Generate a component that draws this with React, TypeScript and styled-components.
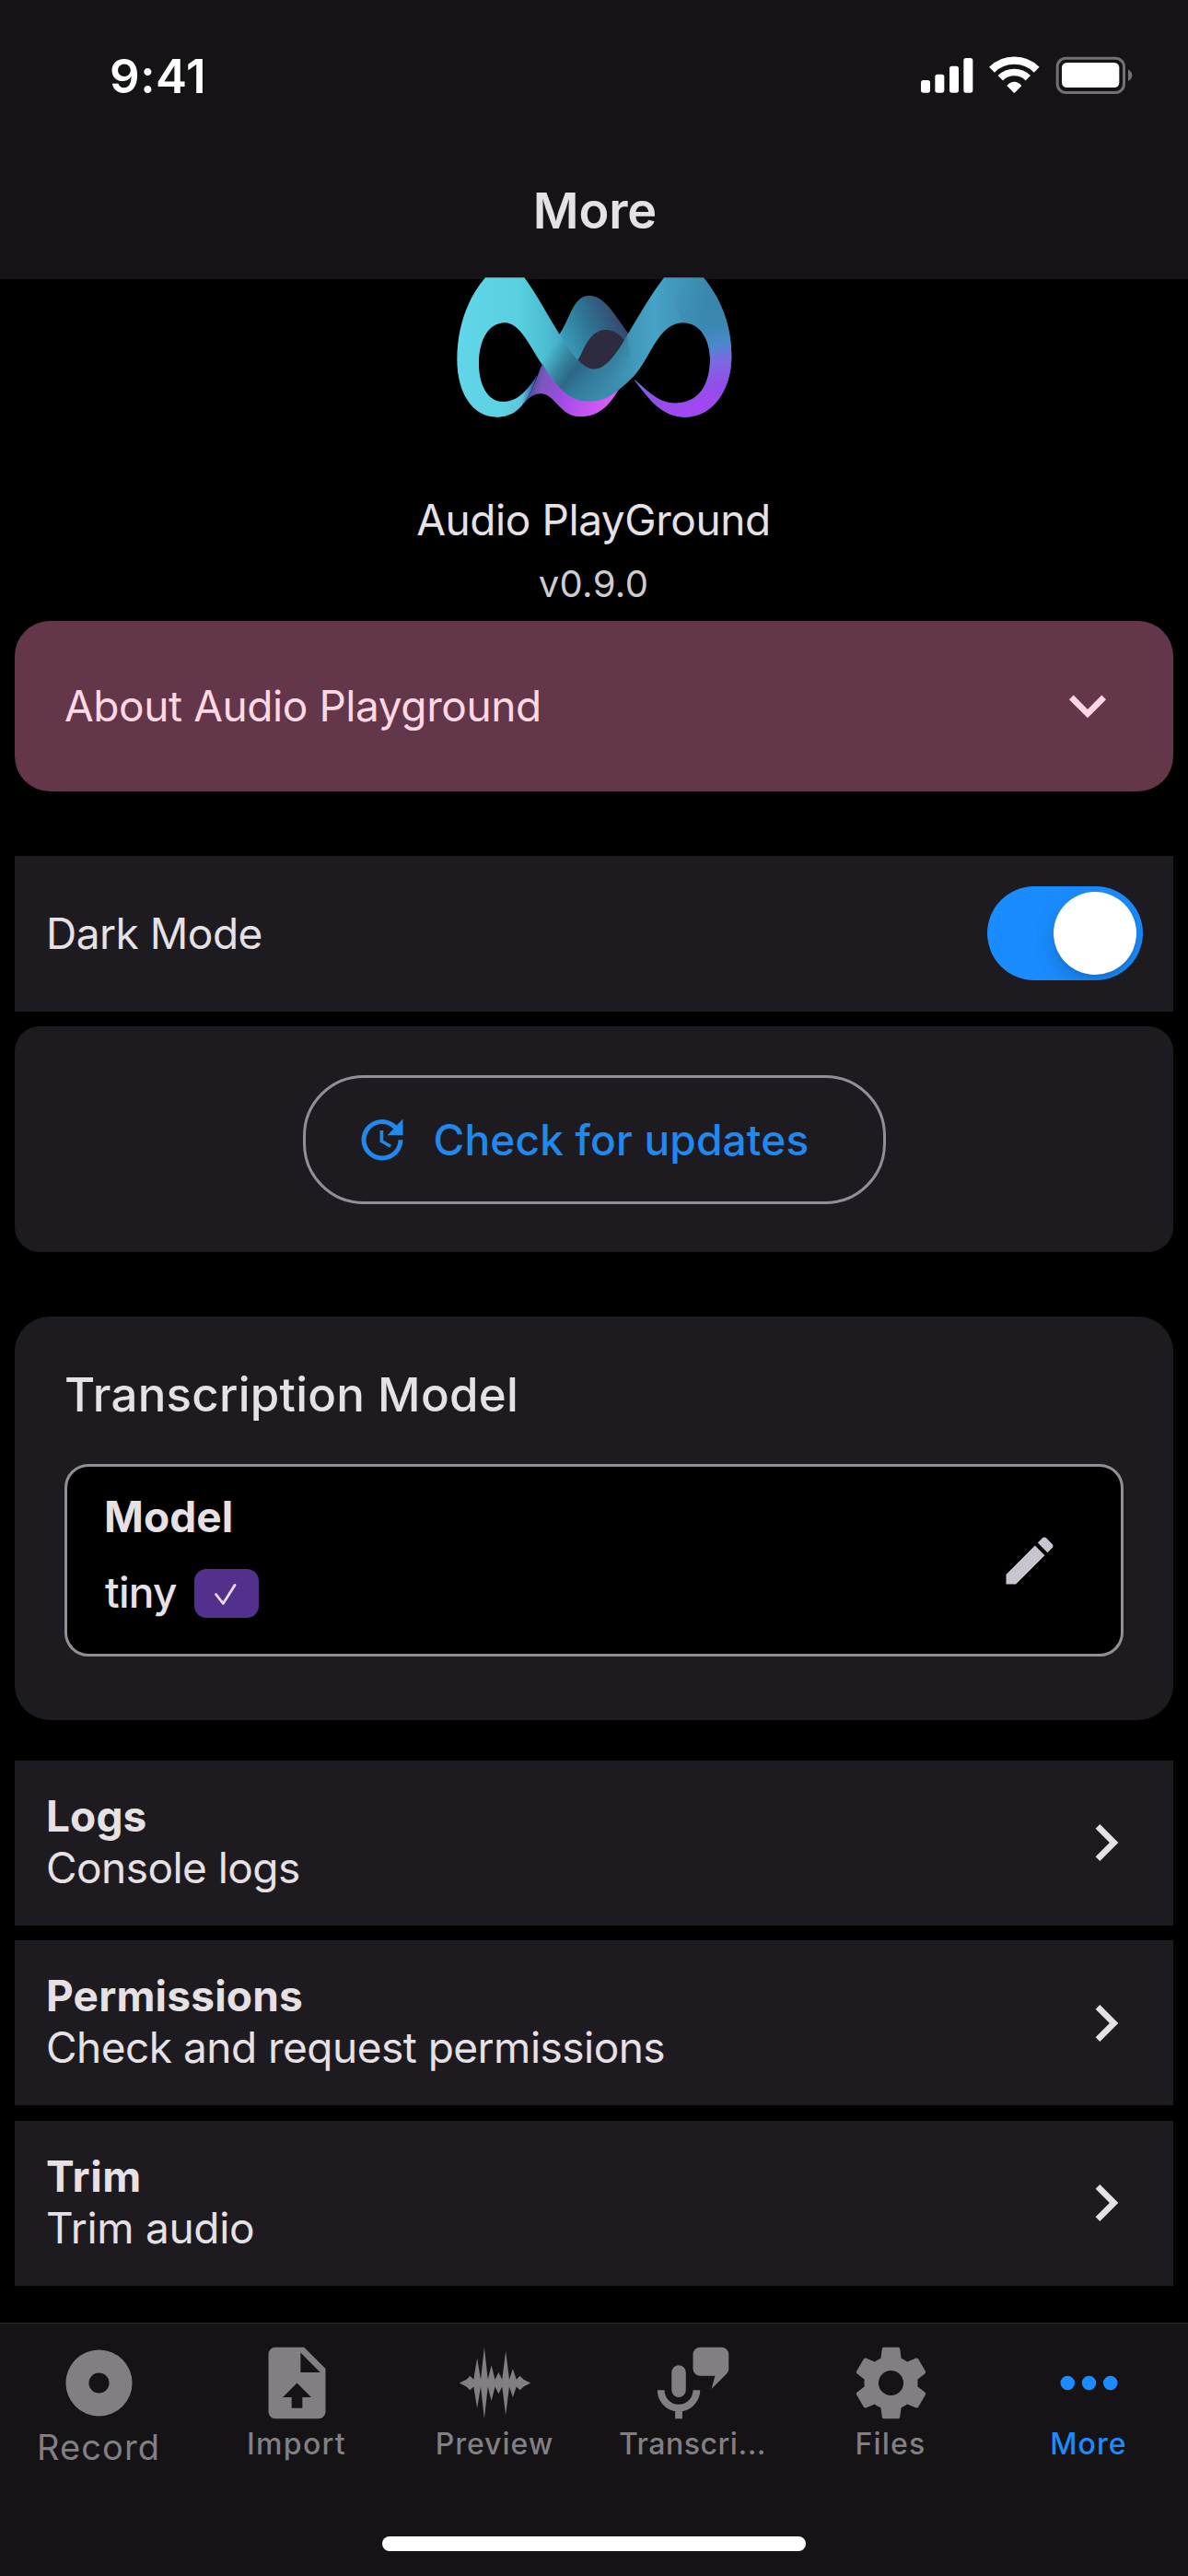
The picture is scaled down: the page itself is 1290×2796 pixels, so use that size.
import React from 'react';
import styled, { createGlobalStyle } from 'styled-components';

const color = {
  page: '#000000',
  bar: '#151316',
  card: '#1e1b20',
  text: '#e6e1e5',
  blue: '#1a8cff',
  muted: '#827f83',
  outline: '#938f99',
  pink: '#ffd8e4',
};

const GlobalStyle = createGlobalStyle`
  body {
    margin: 0;
    background: ${color.page};
    font-family: Inter, Roboto, 'Liberation Sans', sans-serif;
  }
  svg {
    display: block;
    flex-shrink: 0;
  }
`;

const Screen = styled.div`
  display: flex;
  flex-direction: column;
  width: 1290px;
  height: 2796px;
  overflow: hidden;
  background: ${color.page};
  color: ${color.text};
`;

const Header = styled.header`
  flex-shrink: 0;
  height: 303px;
  background: ${color.bar};
`;

const StatusBar = styled.div`
  display: flex;
  align-items: center;
  justify-content: space-between;
  height: 165px;
  padding: 0 40px 0 119px;
`;

const Title = styled.h1`
  margin: 0;
  font-size: 54px;
  font-weight: 600;
  line-height: 127px;
  letter-spacing: -0.15px;
  text-align: center;
  text-indent: 2px;
`;

const Content = styled.main`
  display: flex;
  flex: 1;
  flex-direction: column;
  min-height: 0;
  padding: 0 16px;
`;

const Hero = styled.section`
  display: flex;
  flex-direction: column;
  align-items: center;
  height: 371px;
  padding-right: 1px;

  svg {
    position: relative;
    margin-top: -2px;
  }
`;

interface LabelProps {
  $size?: number;
  $weight?: number;
  $line?: number;
  $spacing?: number;
}

const Label = styled.span<LabelProps>`
  display: block;
  font-size: ${(p) => p.$size ?? 46}px;
  font-weight: ${(p) => p.$weight ?? 400};
  line-height: ${(p) => p.$line ?? 60}px;
  letter-spacing: ${(p) => p.$spacing ?? -0.5}px;
  white-space: nowrap;
`;

const Time = styled(Label)`
  color: #ffffff;
`;

const AppName = styled(Label)`
  margin-top: 64px;
`;

const Version = styled(Label)`
  margin-top: 12px;
  color: #cfcbce;
`;

const Accordion = styled.button`
  display: flex;
  flex-shrink: 0;
  align-items: center;
  justify-content: space-between;
  height: 185px;
  padding: 0 53px 2px 54px;
  border: 0;
  border-radius: 38px;
  background: #633649;
  color: ${color.pink};
  font-family: inherit;
`;

const SettingRow = styled.div`
  display: flex;
  flex-shrink: 0;
  align-items: center;
  justify-content: space-between;
  box-sizing: border-box;
  height: 169px;
  margin-top: 70px;
  padding: 0 33px 1px 34px;
  background: ${color.card};
`;

const Switch = styled.div`
  display: flex;
  align-items: center;
  justify-content: flex-end;
  box-sizing: border-box;
  width: 169px;
  height: 102px;
  padding-right: 7px;
  overflow: hidden;
  border-radius: 51px;
  background: ${color.blue};
`;

const Knob = styled.div`
  width: 90px;
  height: 90px;
  border-radius: 50%;
  background: #ffffff;
  box-shadow: 0 9px 24px rgba(0, 0, 0, 0.17), 0 3px 3px rgba(0, 0, 0, 0.06);
`;

const UpdateCard = styled.section`
  display: flex;
  flex-shrink: 0;
  align-items: center;
  justify-content: center;
  height: 245px;
  margin-top: 16px;
  border-radius: 27px;
  background: ${color.card};
`;

const UpdateButton = styled.button`
  display: flex;
  align-items: center;
  gap: 26px;
  box-sizing: border-box;
  width: 633px;
  height: 140px;
  padding: 0 0 0 53px;
  border: 3px solid ${color.outline};
  border-radius: 66px;
  background: transparent;
  color: #2188ee;
  font-family: inherit;
`;

const ModelCard = styled.section`
  flex-shrink: 0;
  box-sizing: border-box;
  height: 438px;
  margin-top: 70px;
  padding: 53px 54px 0 54px;
  border-radius: 38px;
  background: ${color.card};
`;

const ModelBox = styled.div`
  display: flex;
  align-items: center;
  justify-content: space-between;
  box-sizing: border-box;
  height: 209px;
  margin-top: 43px;
  padding: 0 65px 0 40px;
  border: 3px solid #918f94;
  border-radius: 26px;
  background: ${color.page};
`;

const ModelInfo = styled.div`
  align-self: flex-start;
  padding-top: 24px;
`;

const ModelValue = styled.div`
  display: flex;
  align-items: center;
  gap: 19px;
  height: 53px;
  margin-top: 27px;
  padding-left: 1px;

  > span {
    margin-top: -3px;
  }
`;

const Badge = styled.div`
  width: 70px;
  height: 53px;
  border-radius: 13px;
  background: #53308b;
`;

const LinkList = styled.nav`
  display: flex;
  flex-shrink: 0;
  flex-direction: column;
  gap: 16.5px;
  margin-top: 43.5px;
`;

const LinkRow = styled.a`
  display: flex;
  align-items: center;
  justify-content: space-between;
  height: 179px;
  padding: 0 33px 0 34px;
  background: ${color.card};
`;

const LinkText = styled.div`
  padding-bottom: 3px;
`;

const TabBar = styled.footer`
  display: flex;
  flex-shrink: 0;
  flex-direction: column;
  align-items: center;
  justify-content: space-between;
  box-sizing: border-box;
  height: 275px;
  padding-bottom: 27px;
  border-top: 1px solid #2c2a2e;
  background: ${color.bar};
`;

const Tabs = styled.div`
  display: grid;
  grid-template-columns: repeat(6, 215px);
  padding-top: 18px;
`;

const Tab = styled.a<{ $active?: boolean }>`
  display: flex;
  flex-direction: column;
  align-items: center;
  padding-right: 1px;
  color: ${(p) => (p.$active ? color.blue : color.muted)};
`;

const HomeIndicator = styled.div`
  width: 460px;
  height: 16px;
  border-radius: 8px;
  background: #ffffff;
`;

const paths = {
  chevronDown: 'M7.41,8.58L12,13.17L16.59,8.58L18,10L12,16L6,10L7.41,8.58Z',
  chevronRight: 'M8.59,16.58L13.17,12L8.59,7.41L10,6L16,12L10,18L8.59,16.58Z',
  update:
    'M21,10.12H14.22L16.96,7.3C14.23,4.6 9.81,4.5 7.08,7.2C4.35,9.91 4.35,14.28 7.08,17C9.81,19.7 14.23,19.7 16.96,17C18.32,15.65 19,14.08 19,12.1H21C21,14.08 20.12,16.65 18.36,18.39C14.85,21.87 9.15,21.87 5.64,18.39C2.14,14.92 2.11,9.28 5.62,5.81C9.13,2.34 14.76,2.34 18.27,5.81L21,3V10.12M12.5,8V12.25L16,14.33L15.28,15.54L11,13V8H12.5Z',
  pencil:
    'M20.71,7.04C21.1,6.65 21.1,6 20.71,5.63L18.37,3.29C18,2.9 17.35,2.9 16.96,3.29L15.12,5.12L18.87,8.87M3,17.25V21H6.75L17.81,9.93L14.06,6.18L3,17.25Z',
  record:
    'M12,2.7A9.3,9.3 0 1,1 12,21.3A9.3,9.3 0 1,1 12,2.7ZM12,9.15A2.85,2.85 0 1,0 12,14.85A2.85,2.85 0 1,0 12,9.15Z',
  fileUpload:
    'M14,2H6C4.89,2 4,2.89 4,4V20C4,21.11 4.89,22 6,22H18C19.11,22 20,21.11 20,20V8L14,2M13.5,16V19H10.5V16H8L12,12L16,16H13.5M13,9V3.5L18.5,9H13Z',
  waveform:
    'M22 12L20 13L19 14L18 13L17 16L16 13L15 21L14 13L13 15L12 13L11 17L10 13L9 22L8 13L7 19L6 13L5 14L4 13L2 12L4 11L5 10L6 11L7 5L8 11L9 2L10 11L11 7L12 11L13 9L14 11L15 3L16 11L17 8L18 11L19 10L20 11L22 12Z',
  micMessage:
    'M8,7A2,2 0 0,1 10,9V14A2,2 0 0,1 8,16A2,2 0 0,1 6,14V9A2,2 0 0,1 8,7M14,14C14,16.97 11.84,19.44 9,19.92V22H7V19.92C4.16,19.44 2,16.97 2,14H4A4,4 0 0,0 8,18A4,4 0 0,0 12,14H14M21.41,9.41L17.17,13.66L18.18,10H14A2,2 0 0,1 12,8V4A2,2 0 0,1 14,2H20A2,2 0 0,1 22,4V8C22,8.55 21.78,9.05 21.41,9.41Z',
  cog:
    'M12,15.5A3.5,3.5 0 0,1 8.5,12A3.5,3.5 0 0,1 12,8.5A3.5,3.5 0 0,1 15.5,12A3.5,3.5 0 0,1 12,15.5M19.43,12.97C19.47,12.65 19.5,12.33 19.5,12C19.5,11.67 19.47,11.34 19.43,11L21.54,9.37C21.73,9.22 21.78,8.95 21.66,8.73L19.66,5.27C19.54,5.05 19.27,4.96 19.05,5.05L16.56,6.05C16.04,5.66 15.5,5.32 14.87,5.07L14.5,2.42C14.46,2.18 14.25,2 14,2H10C9.75,2 9.54,2.18 9.5,2.42L9.13,5.07C8.5,5.32 7.96,5.66 7.44,6.05L4.95,5.05C4.73,4.96 4.46,5.05 4.34,5.27L2.34,8.73C2.21,8.95 2.27,9.22 2.46,9.37L4.57,11C4.53,11.34 4.5,11.67 4.5,12C4.5,12.33 4.53,12.65 4.57,12.97L2.46,14.63C2.27,14.78 2.21,15.05 2.34,15.27L4.34,18.73C4.46,18.95 4.73,19.03 4.95,18.95L7.44,17.94C7.96,18.34 8.5,18.68 9.13,18.93L9.5,21.58C9.54,21.82 9.75,22 10,22H14C14.25,22 14.46,21.82 14.5,21.58L14.87,18.93C15.5,18.67 16.04,18.34 16.56,17.94L19.05,18.95C19.27,19.03 19.54,18.95 19.66,18.73L21.66,15.27C21.78,15.05 21.73,14.78 21.54,14.63L19.43,12.97Z',
  dots:
    'M16,12A2,2 0 0,1 18,10A2,2 0 0,1 20,12A2,2 0 0,1 18,14A2,2 0 0,1 16,12M10,12A2,2 0 0,1 12,10A2,2 0 0,1 14,12A2,2 0 0,1 12,14A2,2 0 0,1 10,12M4,12A2,2 0 0,1 6,10A2,2 0 0,1 8,12A2,2 0 0,1 6,14A2,2 0 0,1 4,12Z',
};

type IconName = keyof typeof paths;

function Icon({ name, size, fill = 'currentColor' }: { name: IconName; size: number; fill?: string }) {
  return (
    <svg width={size} height={size} viewBox="0 0 24 24" fill={fill} aria-hidden="true">
      <path d={paths[name]} />
    </svg>
  );
}

function StatusIcons() {
  return (
    <svg width="270" height="65" viewBox="0 0 810 195" fill="#fff" aria-hidden="true">
      <rect x="60" y="111" width="30" height="41" rx="8" />
      <rect x="106" y="92" width="30" height="60" rx="8" />
      <rect x="153" y="65" width="30" height="87" rx="8" />
      <rect x="199" y="39" width="30" height="113" rx="8" />
      <g fill="none" stroke="#fff">
        <path d="M291 77A104 104 0 0 1 437 77" strokeWidth="25" />
        <path d="M319 104A64 64 0 0 1 409 104" strokeWidth="23" />
      </g>
      <path d="M340 129Q364 104 388 129L367 151Q364 154 361 151Z" />
      <rect x="504.5" y="39.5" width="217" height="112" rx="28" fill="none" stroke="#737175" strokeWidth="9" />
      <rect x="519" y="54" width="187" height="81" rx="16" />
      <path d="M735 76Q748 84 748 95Q748 107 735 114Z" fill="#737175" />
    </svg>
  );
}

function Logo() {
  return (
    <svg width="350" height="169" viewBox="0 33 1050 507" aria-hidden="true">
      <defs>
        <linearGradient id="ribbon" gradientUnits="userSpaceOnUse" x1="80" y1="190" x2="900" y2="190">
          <stop offset="0" stopColor="#62d6e8" />
          <stop offset="0.25" stopColor="#58cfdf" />
          <stop offset="0.36" stopColor="#4abcd2" />
          <stop offset="0.5" stopColor="#3b8fb0" />
          <stop offset="0.62" stopColor="#3b8cae" />
          <stop offset="0.78" stopColor="#46a3c6" />
          <stop offset="1" stopColor="#3a86ad" />
        </linearGradient>
        <linearGradient id="fold" gradientUnits="userSpaceOnUse" x1="385" y1="270" x2="560" y2="415">
          <stop offset="0" stopColor="#2a5f7c" stopOpacity="0" />
          <stop offset="0.3" stopColor="#2a5f7c" stopOpacity="0.6" />
          <stop offset="0.45" stopColor="#27587a" stopOpacity="0.8" />
          <stop offset="0.65" stopColor="#2a6a88" stopOpacity="0.6" />
          <stop offset="1" stopColor="#2f6f8d" stopOpacity="0" />
        </linearGradient>
        <linearGradient id="loop" gradientUnits="userSpaceOnUse" x1="860" y1="60" x2="945" y2="470">
          <stop offset="0" stopColor="#3a86ad" stopOpacity="0" />
          <stop offset="0.3" stopColor="#3a88b2" stopOpacity="0.6" />
          <stop offset="0.48" stopColor="#4a8acb" />
          <stop offset="0.6" stopColor="#7a6ae0" />
          <stop offset="0.8" stopColor="#934dea" />
          <stop offset="1" stopColor="#a845f6" />
        </linearGradient>
        <linearGradient id="under" gradientUnits="userSpaceOnUse" x1="315" y1="380" x2="590" y2="450">
          <stop offset="0" stopColor="#4a4a9c" />
          <stop offset="0.14" stopColor="#7c56bd" />
          <stop offset="0.4" stopColor="#a04ce4" />
          <stop offset="0.75" stopColor="#c956f3" />
          <stop offset="1" stopColor="#dd60f4" />
        </linearGradient>
        <linearGradient id="back" gradientUnits="userSpaceOnUse" x1="430" y1="250" x2="615" y2="175">
          <stop offset="0" stopColor="#3a9bba" />
          <stop offset="0.45" stopColor="#2f7594" />
          <stop offset="1" stopColor="#34496e" />
        </linearGradient>
        <linearGradient id="tail" gradientUnits="userSpaceOnUse" x1="235" y1="415" x2="322" y2="432">
          <stop offset="0" stopColor="#5dd3e3" />
          <stop offset="0.65" stopColor="#5cc4de" />
          <stop offset="1" stopColor="#2a4fa8" />
        </linearGradient>
      </defs>

      {/* Ribbon passing behind the centre fold */}
      <path d="M410 222C450 165 456 93 510 93C562 93 598 165 640 220L622 240C600 290 565 340 525 335C490 330 480 320 465 302Z" fill="url(#back)" />
      <path d="M472 302C490 280 506 204 564 204C592 204 608 220 624 238C600 290 565 336 525 334C500 334 487 318 472 302Z" fill="#2d2b40" />

      {/* Purple underside */}
      <path d="M355 318C335 370 322 408 297 442C315 425 330 412 350 412C400 412 412 487 480 487C550 487 580 440 609 394L510 430L430 400Z" fill="url(#under)" />

      {/* Front ribbon */}
      <path
        d="M171 34H298C340 90 378 165 415 222C440 258 478 332 525 332C565 332 600 280 633 222C673 155 710 90 753 34H882C945 110 973 200 973 290C973 400 910 488 825 488C745 488 705 430 655 365C690 392 730 443 790 443C860 443 903 390 903 300C903 235 870 181 815 181C735 181 710 295 655 355Q632 379 607 398C575 423 550 437 510 437C430 437 395 372 357 318C318 263 285 181 235 181C180 181 150 240 150 315C150 385 180 438 228 438L240 484Q224 488 207 488C130 488 79 410 79 300C79 200 110 105 171 34Z"
        fill="url(#ribbon)"
      />

      {/* Closing end of the left loop */}
      <path d="M226 438C275 438 305 405 341 350C328 390 315 415 297 442C275 472 250 488 207 488Z" fill="url(#tail)" />

      {/* Shade across the fold and the purple turn of the right loop */}
      <path d="M380 168L415 222C440 258 478 332 525 332C565 332 600 280 633 222L655 355Q632 379 607 398C575 423 550 437 510 437C430 437 395 372 357 318L320 262Z" fill="url(#fold)" />
      <path
        d="M753 34H882C945 110 973 200 973 290C973 400 910 488 825 488C745 488 705 430 655 365C690 392 730 443 790 443C860 443 903 390 903 300C903 235 870 181 815 181Z"
        fill="url(#loop)"
      />
    </svg>
  );
}

const links = [
  { title: 'Logs', detail: 'Console logs', titleSpacing: 0.1, detailSpacing: -0.55 },
  { title: 'Permissions', detail: 'Check and request permissions', titleSpacing: 0.18, detailSpacing: -0.52 },
  { title: 'Trim', detail: 'Trim audio', titleSpacing: 0.5, detailSpacing: -0.31 },
];

const tabs: { label: string; icon: IconName; large?: boolean; active?: boolean; spacing: number }[] = [
  { label: 'Record', icon: 'record', large: true, spacing: 1.1 },
  { label: 'Import', icon: 'fileUpload', spacing: 1.3 },
  { label: 'Preview', icon: 'waveform', spacing: 1 },
  { label: 'Transcri...', icon: 'micMessage', spacing: 0.53 },
  { label: 'Files', icon: 'cog', spacing: 1.2 },
  { label: 'More', icon: 'dots', active: true, spacing: 1.1 },
];

export default function App() {
  return (
    <Screen>
      <GlobalStyle />
      <Header>
        <StatusBar>
          <Time $size={51} $weight={600} $spacing={0.6}>9:41</Time>
          <StatusIcons />
        </StatusBar>
        <Title>More</Title>
      </Header>

      <Content>
        <Hero>
          <Logo />
          <AppName $spacing={-0.41}>Audio PlayGround</AppName>
          <Version $size={40} $line={56} $spacing={0.35}>v0.9.0</Version>
        </Hero>

        <Accordion>
          <Label $spacing={-0.42}>About Audio Playground</Label>
          <Icon name="chevronDown" size={80} />
        </Accordion>

        <SettingRow>
          <Label>Dark Mode</Label>
          <Switch role="switch" aria-checked="true">
            <Knob />
          </Switch>
        </SettingRow>

        <UpdateCard>
          <UpdateButton>
            <Icon name="update" size={60} />
            <Label $weight={500} $spacing={0.19}>Check for updates</Label>
          </UpdateButton>
        </UpdateCard>

        <ModelCard>
          <Label $size={51} $weight={500} $line={64} $spacing={0.26}>Transcription Model</Label>
          <ModelBox>
            <ModelInfo>
              <Label $weight={700} $spacing={0.1}>Model</Label>
              <ModelValue>
                <Label $weight={500} $spacing={-0.7}>tiny</Label>
                <Badge>
                  <svg width="70" height="53" viewBox="0 0 70 53" fill="none" aria-hidden="true">
                    <path d="M23.5 27.5L31.3 37.5L44 17.5" stroke="#eaddff" strokeWidth="2.8" strokeLinecap="round" strokeLinejoin="round" />
                  </svg>
                </Badge>
              </ModelValue>
            </ModelInfo>
            <Icon name="pencil" size={68} fill="#cac4d0" />
          </ModelBox>
        </ModelCard>

        <LinkList>
          {links.map((link) => (
            <LinkRow key={link.title}>
              <LinkText>
                <Label $weight={700} $line={56} $spacing={link.titleSpacing}>{link.title}</Label>
                <Label $line={56} $spacing={link.detailSpacing}>{link.detail}</Label>
              </LinkText>
              <Icon name="chevronRight" size={80} />
            </LinkRow>
          ))}
        </LinkList>
      </Content>

      <TabBar>
        <Tabs>
          {tabs.map((tab) => (
            <Tab key={tab.label} $active={tab.active}>
              <Icon name={tab.icon} size={93} />
              <Label
                $size={tab.large ? 38 : 32}
                $weight={tab.large ? 400 : 500}
                $line={tab.large ? 47 : 40}
                $spacing={tab.spacing}
              >
                {tab.label}
              </Label>
            </Tab>
          ))}
        </Tabs>
        <HomeIndicator />
      </TabBar>
    </Screen>
  );
}
